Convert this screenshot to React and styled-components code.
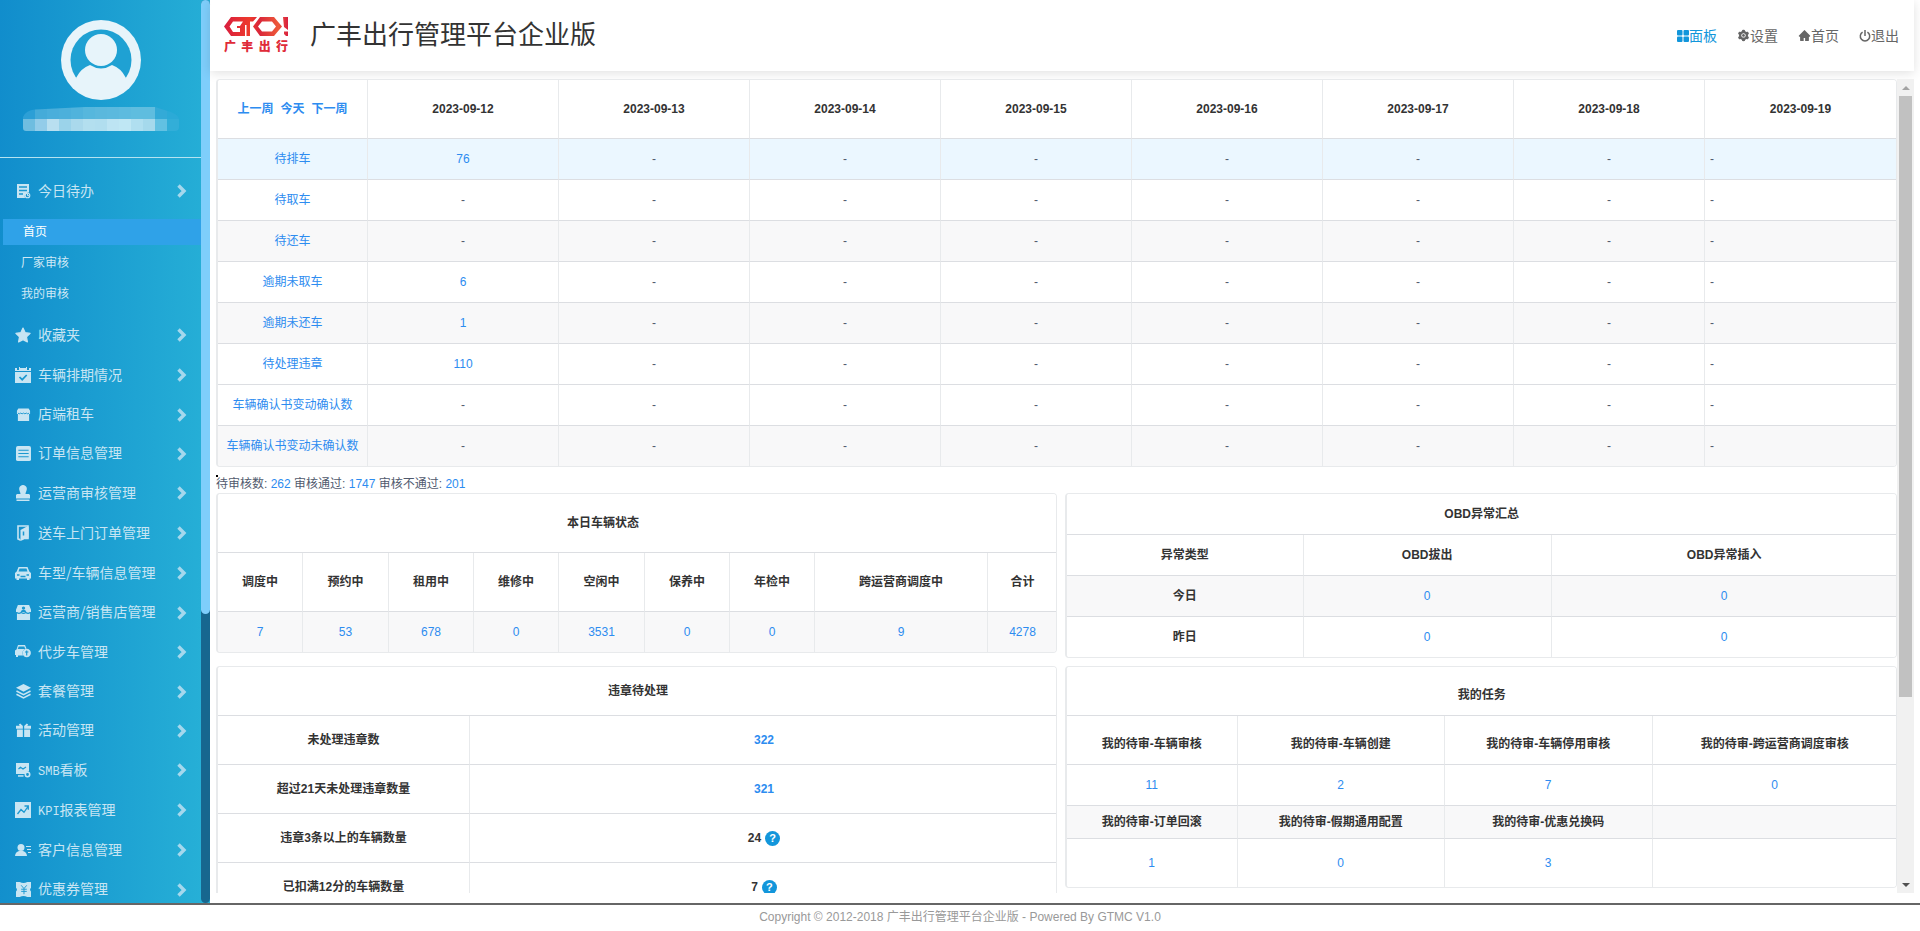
import React from 'react';
import styled, { createGlobalStyle } from 'styled-components';
import { AiFillHome, AiFillSetting } from 'react-icons/ai';

const colors = {
	link: '#2d8cf0',
	primary: '#1296db',
	text: '#515a6e',
	heading: '#333',
	border: '#e8eaec',
	rowLine: '#dcdee2',
	stripe: '#f8f8f9',
	active: '#ebf7ff',
	menuIcon: '#c8e5f3',
};

const days = [
	'2023-09-12',
	'2023-09-13',
	'2023-09-14',
	'2023-09-15',
	'2023-09-16',
	'2023-09-17',
	'2023-09-18',
	'2023-09-19',
];

const scheduleRows = [
	{ label: '待排车', count: 76, tone: 'active' },
	{ label: '待取车' },
	{ label: '待还车', tone: 'stripe' },
	{ label: '逾期未取车', count: 6 },
	{ label: '逾期未还车', count: 1, tone: 'stripe' },
	{ label: '待处理违章', count: 110 },
	{ label: '车辆确认书变动确认数' },
	{ label: '车辆确认书变动未确认数', tone: 'stripe' },
];

const vehicleStatus = [
	{ label: '调度中', value: 7, width: 85 },
	{ label: '预约中', value: 53, width: 86 },
	{ label: '租用中', value: 678, width: 85 },
	{ label: '维修中', value: 0, width: 85 },
	{ label: '空闲中', value: 3531, width: 86 },
	{ label: '保养中', value: 0, width: 85 },
	{ label: '年检中', value: 0, width: 85 },
	{ label: '跨运营商调度中', value: 9, width: 173 },
	{ label: '合计', value: 4278, width: 69 },
];

const violations = [
	{ label: '未处理违章数', value: 322, link: true },
	{ label: '超过21天未处理违章数量', value: 321, link: true },
	{ label: '违章3条以上的车辆数量', value: 24 },
	{ label: '已扣满12分的车辆数量', value: 7 },
];

const icons = {
	todo: (
		<>
			<path d="M2 1h12v8.500a4 4 0 0 0-4 5.500H2z" />
			<path d="M4 4h8M4 7.500h8M4 11h4" stroke="#1b98d0" strokeWidth="1.300" />
			<circle cx="12.500" cy="12.500" r="2.300" fill="none" stroke="currentColor" strokeWidth="1.100" />
			<path d="M12.500 11v1.700h1.500" fill="none" stroke="currentColor" />
		</>
	),
	star: (
		<path
			d="M8 1l2.200 4.700 4.900.700-3.600 3.500.9 5L8 12.600l-4.400 2.300.9-5L.9 6.400l4.900-.7z"
			stroke="currentColor"
			strokeWidth="1.200"
			strokeLinejoin="round"
		/>
	),
	calendar: (
		<>
			<path d="M0 1h2v2h2V0h1v1h6V0h1v3h2V1h2v3H0z" />
			<path d="M0 5h16v11H0z" />
			<path d="M4.500 10l2.700 2.700L11.700 8" fill="none" stroke="#1b98d0" strokeWidth="1.700" />
		</>
	),
	store: (
		<>
			<path d="M2.500 1.500h11L15 4v3.500h-1V15H2V7.500H1V4z" />
			<path d="M2 6.500q1.500 1.500 3 0 1.500 1.500 3 0 1.500 1.500 3 0 1.500 1.500 3 0" fill="none" stroke="#1b98d0" />
		</>
	),
	list: (
		<>
			<rect width="16" height="16" rx="2" />
			<path d="M2.500 4.500h11M2.500 8h11M2.500 11.500h11" stroke="#1b98d0" strokeWidth="1.200" />
		</>
	),
	stamp: (
		<>
			<path d="M8 0a3.700 3.700 0 0 1 3.700 4.700C11.400 6.500 10.500 7.500 10.500 9H14l1 1v3.500H1V10l1-1h3.500C5.500 7.500 4.600 6.500 4.300 4.700A3.700 3.700 0 0 1 8 0z" />
			<path d="M1.500 14.500h13V16h-13z" />
		</>
	),
	door: (
		<>
			<path d="M3 13V1h10v12.500h-3" fill="none" stroke="currentColor" strokeWidth="1.600" />
			<path d="M5.500 5L11 2h2.500v10.500L5.500 16z" />
			<path d="M2.200 12.500l3.300 1.500v2l-3.300-1.500z" />
			<path d="M8.500 6.500v4" stroke="#1b98d0" strokeWidth="1.500" />
		</>
	),
	car: (
		<>
			<path d="M3.500 2h9l1.800 4.500L16 8v5.500h-1.500V15H12v-1.500H4V15H1.500v-1.500H0V8l1.700-1.500z" />
			<path d="M4.500 3.500h7l1 3h-9z" fill="#1b98d0" />
			<path d="M2 10h2.500M11.500 10H14M5.500 11.500h5" stroke="#1b98d0" strokeWidth="1.300" />
		</>
	),
	dealer: (
		<>
			<path d="M2 0h12l2 5v2.500h-1V16H1V7.500H0V5z" />
			<circle cx="8" cy="3.300" r="1.800" fill="#1b98d0" />
			<path d="M5 7.500q.5-2.500 3-2.500t3 2.500" fill="#1b98d0" />
			<path d="M1 8q2 2 4.500 0 2.500 2 5 0Q13 10 15 8" fill="none" stroke="#1b98d0" strokeWidth="1.200" />
		</>
	),
	scooter: (
		<>
			<path d="M3 1h7l1.500 3.500A4.700 4.700 0 0 0 8 11.500H3V13H1v-2H0V6.500l1.500-1z" />
			<path d="M3.700 2.500h5.600l1 2.500H2.700z" fill="#1b98d0" />
			<circle cx="11.700" cy="9" r="4.200" />
			<path d="M11.700 6.500v5M10 8h3.400" stroke="#1b98d0" strokeWidth="1.200" />
		</>
	),
	layers: (
		<>
			<path d="M8 0l8 4-8 4.200L0 4z" />
			<path d="M.5 7.500L8 11.300l7.500-3.800M.5 11L8 14.900l7.500-3.900" fill="none" stroke="currentColor" strokeWidth="1.700" />
		</>
	),
	gift: (
		<>
			<path d="M0 3h4L3 1.500 4.500.500 7 3h2l2.500-2.500L13 1.500 12 3h4v3H8.700V3H7.300v3H0z" />
			<path d="M1 7h6.300v8H1zM8.700 7H15v8H8.700z" />
		</>
	),
	smb: (
		<>
			<path d="M1 1h13v8.500a4 4 0 0 0-4 2.500H1z" />
			<path d="M3.500 7l2-1.700 2.500 1.700L11 5" fill="none" stroke="#1b98d0" strokeWidth="1.200" />
			<circle cx="12.500" cy="12.500" r="2.200" fill="none" stroke="currentColor" strokeWidth="1.600" />
			<path d="M3 13.200h5.500v1.500H3z" />
		</>
	),
	chart: (
		<>
			<rect width="16" height="16" />
			<path d="M2.500 12L6 7.500l3 2.800L13 4.500M9.500 4h3.800v3.800" fill="none" stroke="#1b98d0" strokeWidth="1.300" />
		</>
	),
	customer: (
		<>
			<circle cx="6" cy="5.500" r="3.500" />
			<path d="M0 14q.3-4 4-5h4q3.700 1 4 5z" />
			<path d="M11 4.500h5M12 7.500h4M13 10.500h3" stroke="currentColor" strokeWidth="1.200" />
		</>
	),
	coupon: (
		<>
			<path d="M0 0h4q4 2 8 0h4v6q-2 2 0 4v6h-4q-4-2-8 0H0v-6q2-2 0-4z" />
			<path d="M5.500 3.500L8.500 7l3-3.500M8.500 7v6M5.500 7.700h6M5.500 10h6" fill="none" stroke="#1b98d0" />
		</>
	),
};

// icon size also sets the height of the row
const menu = [
	{ icon: 'star', label: '收藏夹', size: 16 },
	{ icon: 'calendar', label: '车辆排期情况', size: 16 },
	{ icon: 'store', label: '店端租车', size: 15 },
	{ icon: 'list', label: '订单信息管理', size: 15 },
	{ icon: 'stamp', label: '运营商审核管理', size: 16 },
	{ icon: 'door', label: '送车上门订单管理', size: 16 },
	{ icon: 'car', label: '车型/车辆信息管理', size: 16 },
	{ icon: 'dealer', label: '运营商/销售店管理', size: 15 },
	{ icon: 'scooter', label: '代步车管理', size: 16 },
	{ icon: 'layers', label: '套餐管理', size: 15 },
	{ icon: 'gift', label: '活动管理', size: 15 },
	{ icon: 'smb', prefix: 'SMB', label: '看板', size: 16 },
	{ icon: 'chart', prefix: 'KPI', label: '报表管理', size: 16 },
	{ icon: 'customer', label: '客户信息管理', size: 16 },
	{ icon: 'coupon', label: '优惠券管理', size: 15 },
];

const nameTiles = [
	['#2c9fd6', '#6fbde0'],
	['#45abd9', '#93cce9'],
	['#4aaedb', '#b9dff0'],
	['#4cb0db', '#9bd3ea'],
	['#50b3dc', '#aad9ec'],
	['#56b7dd', '#b3dfef'],
	['#5ab8dd', '#b1deef'],
	['#5bb9de', '#bde4f3'],
	['#5dbbdf', '#bfe7f4'],
	['#5fbddf', '#b0dff0'],
	['#5fbddf', '#a5d9ec'],
	['#33aad7', '#62c1e2'],
	['#2baad7', '#32aed8'],
];

function MenuItem({ icon, prefix, label, size }) {
	return (
		<MenuLink href="#">
			<IconSlot>
				<svg width={size} height={size} viewBox="0 0 16 16" fill="currentColor">
					{icons[icon]}
				</svg>
			</IconSlot>
			<MenuLabel>
				{prefix && <Latin>{prefix}</Latin>}
				{label}
			</MenuLabel>
			<svg width="10" height="14" viewBox="0 0 10 14" fill="none" stroke="#a5d8ed" strokeWidth="3.400">
				<path d="M1.500 1.500L7 7l-5.500 5.500" />
			</svg>
		</MenuLink>
	);
}

function Sidebar() {
	return (
		<SidebarWrap>
			<SidebarContent>
				<Profile>
					<svg width="80" height="80" viewBox="0 0 80 80">
						<circle cx="40" cy="40" r="40" fill="#e7f4fa" />
						<circle cx="40" cy="40" r="30.500" fill="#1fa1d3" />
						<path d="M15 58q5-10 14-13 11 7 22 0 9 3 14 13-6 17-25 17T15 58z" fill="#e7f4fa" />
						<circle cx="40" cy="30" r="16" fill="#e7f4fa" />
					</svg>
					<svg width="156" height="24" viewBox="0 0 156 24">
						<clipPath id="name">
							<path d="M0 10Q3 3 12 2.500L62 0h70l16 5q8 3 8 8v7q0 4-4 4H3q-3 0-3-3z" />
						</clipPath>
						<g clipPath="url(#name)" shapeRendering="crispEdges">
							{nameTiles.map(([top, bottom], i) => (
								<React.Fragment key={i}>
									<rect x={i * 12} width="12" height="12" fill={top} />
									<rect x={i * 12} y="12" width="12" height="12" fill={bottom} />
								</React.Fragment>
							))}
						</g>
					</svg>
				</Profile>
				<Menu>
					<MenuItem icon="todo" label="今日待办" size={16} />
					<SubMenu>
						<SubLink href="#" $active>
							首页
						</SubLink>
						<SubLink href="#">厂家审核</SubLink>
						<SubLink href="#">我的审核</SubLink>
					</SubMenu>
					{menu.map(item => (
						<MenuItem key={item.label} {...item} />
					))}
				</Menu>
			</SidebarContent>
			<SideTrack>
				<SideThumb />
			</SideTrack>
		</SidebarWrap>
	);
}

function Logo() {
	return (
		<LogoWrap>
			<svg width="64" height="19" viewBox="0 0 64 19">
				<defs>
					<linearGradient id="red" x1="0" x2="1" y1="0" y2="0">
						<stop offset="0" stopColor="#d81e3f" />
						<stop offset=".4" stopColor="#ee3a2c" />
						<stop offset=".55" stopColor="#d9263a" />
						<stop offset=".85" stopColor="#ee5a3a" />
						<stop offset="1" stopColor="#d81e3f" />
					</linearGradient>
				</defs>
				<g fill="url(#red)">
					<path
						fillRule="evenodd"
						d="M0 9.500L7 0h26l-4 4.500h-3V19h-3.500V8H21v11H7zM5.500 9.500L9 15h7v-4h-3V9h3l3-4.500H9zM36 0h14l8 9.500-8 9.500H36l-7-9.500zM38 4.500l-4 5 4 5h10l4-5-4-5zM59 0h5v13l-4-3zM60 14.500h4V19h-2l-2-2z"
					/>
				</g>
			</svg>
			<LogoText>
				<span>广</span>
				<span>丰</span>
				<span>出</span>
				<span>行</span>
			</LogoText>
		</LogoWrap>
	);
}

function Header() {
	return (
		<HeaderBar>
			<Logo />
			<Title>广丰出行管理平台企业版</Title>
			<Nav>
				<NavLink href="#" $active>
					<svg width="12" height="12" viewBox="0 0 12 12" fill="currentColor">
						<rect width="5.500" height="5.500" rx="1" />
						<rect x="6.500" width="5.500" height="5.500" rx="1" />
						<rect y="6.500" width="5.500" height="5.500" rx="1" />
						<rect x="6.500" y="6.500" width="5.500" height="5.500" rx="1" />
					</svg>
					面板
				</NavLink>
				<NavLink href="#">
					<AiFillSetting size={13} />
					设置
				</NavLink>
				<NavLink href="#">
					<AiFillHome size={13} />
					首页
				</NavLink>
				<NavLink href="#">
					<svg width="12" height="12" viewBox="0 0 12 12" fill="none" stroke="currentColor" strokeWidth="1.500">
						<path d="M3.600 2.200a4.700 4.700 0 1 0 4.800 0M6 0v6" />
					</svg>
					退出
				</NavLink>
			</Nav>
		</HeaderBar>
	);
}

function Schedule() {
	return (
		<Card>
			<Table>
				<colgroup>
					<Col $width={150} />
					{days.map(day => (
						<Col key={day} />
					))}
				</colgroup>
				<thead>
					<Row>
						<HeadCell $height={58}>
							<WeekLinks>
								<Link href="#">上一周</Link>
								<Link href="#">今天</Link>
								<Link href="#">下一周</Link>
							</WeekLinks>
						</HeadCell>
						{days.map(day => (
							<HeadCell key={day} $height={58}>
								{day}
							</HeadCell>
						))}
					</Row>
				</thead>
				<tbody>
					{scheduleRows.map(({ label, count, tone }) => (
						<Row key={label} $tone={tone}>
							<Cell>
								<Link href="#">{label}</Link>
							</Cell>
							{days.map((day, i) => (
								<Cell key={day} $left={i === days.length - 1}>
									{i === 0 && count ? <Link href="#">{count}</Link> : '-'}
								</Cell>
							))}
						</Row>
					))}
				</tbody>
			</Table>
		</Card>
	);
}

function VehicleStatus() {
	return (
		<Card>
			<Table>
				<colgroup>
					{vehicleStatus.map(({ label, width }) => (
						<Col key={label} $width={width} />
					))}
				</colgroup>
				<thead>
					<Row>
						<HeadCell colSpan={8} $height={58} $open>
							本日车辆状态
						</HeadCell>
						<HeadCell $height={58} />
					</Row>
					<Row>
						{vehicleStatus.map(({ label }) => (
							<HeadCell key={label} $height={58}>
								{label}
							</HeadCell>
						))}
					</Row>
				</thead>
				<tbody>
					<Row $tone="stripe">
						{vehicleStatus.map(({ label, value }) => (
							<Cell key={label}>
								<Link href="#">{value}</Link>
							</Cell>
						))}
					</Row>
				</tbody>
			</Table>
		</Card>
	);
}

function ObdSummary() {
	return (
		<Card>
			<Table>
				<colgroup>
					<Col $width={237} />
					<Col $width={248} />
					<Col $width={345} />
				</colgroup>
				<thead>
					<Row>
						<HeadCell colSpan={3}>OBD异常汇总</HeadCell>
					</Row>
					<Row>
						<HeadCell>异常类型</HeadCell>
						<HeadCell>OBD拔出</HeadCell>
						<HeadCell>OBD异常插入</HeadCell>
					</Row>
				</thead>
				<tbody>
					{['今日', '昨日'].map((label, i) => (
						<Row key={label} $tone={i === 0 ? 'stripe' : undefined}>
							<HeadCell>{label}</HeadCell>
							<Cell>
								<Link href="#">0</Link>
							</Cell>
							<Cell>
								<Link href="#">0</Link>
							</Cell>
						</Row>
					))}
				</tbody>
			</Table>
		</Card>
	);
}

function Violations() {
	return (
		<Card>
			<Table>
				<colgroup>
					<Col $width={252} />
					<Col $width={588} />
				</colgroup>
				<thead>
					<Row>
						<HeadCell colSpan={2} $height={48}>
							违章待处理
						</HeadCell>
					</Row>
				</thead>
				<tbody>
					{violations.map(({ label, value, link }) => (
						<Row key={label}>
							<HeadCell $height={48}>{label}</HeadCell>
							<HeadCell $height={48}>
								{link ? (
									<Link href="#">{value}</Link>
								) : (
									<Counter>
										{value}
										<HelpButton type="button">?</HelpButton>
									</Counter>
								)}
							</HeadCell>
						</Row>
					))}
				</tbody>
			</Table>
		</Card>
	);
}

function Tasks() {
	return (
		<Card>
			<Table>
				<colgroup>
					<Col $width={171} />
					<Col $width={207} />
					<Col $width={208} />
					<Col $width={244} />
				</colgroup>
				<thead>
					<Row>
						<HeadCell colSpan={4} $height={40} $top={8}>
							我的任务
						</HeadCell>
					</Row>
					<Row>
						{['我的待审-车辆审核', '我的待审-车辆创建', '我的待审-车辆停用审核', '我的待审-跨运营商调度审核'].map(label => (
							<HeadCell key={label} $height={40} $top={8}>
								{label}
							</HeadCell>
						))}
					</Row>
				</thead>
				<tbody>
					<Row>
						{[11, 2, 7, 0].map((value, i) => (
							<Cell key={i}>
								<Link href="#">{value}</Link>
							</Cell>
						))}
					</Row>
					<Row $tone="stripe">
						{['我的待审-订单回滚', '我的待审-假期通用配置', '我的待审-优惠兑换码', ''].map(label => (
							<HeadCell key={label} $height={32}>
								{label}
							</HeadCell>
						))}
					</Row>
					<Row>
						{[1, 0, 3].map((value, i) => (
							<Cell key={i} $height={48}>
								<Link href="#">{value}</Link>
							</Cell>
						))}
						<Cell />
					</Row>
				</tbody>
			</Table>
		</Card>
	);
}

export default function App() {
	return (
		<Page>
			<GlobalStyle />
			<Body>
				<Sidebar />
				<Main>
					<Header />
					<ContentRow>
						<Content>
							<Schedule />
							<AuditLine>
								待审核数: <Link href="#">262</Link> 审核通过: <Link href="#">1747</Link> 审核不通过:{' '}
								<Link href="#">201</Link>
							</AuditLine>
							<Cards>
								<VehicleStatus />
								<ObdSummary />
								<Violations />
								<Tasks />
							</Cards>
						</Content>
						<ScrollTrack>
							<ScrollArrow>
								<svg width="8" height="4" viewBox="0 0 8 4">
									<path d="M0 4l4-4 4 4z" fill="#a3a3a3" />
								</svg>
							</ScrollArrow>
							<ScrollMiddle>
								<ScrollThumb />
							</ScrollMiddle>
							<ScrollArrow>
								<svg width="8" height="4" viewBox="0 0 8 4">
									<path d="M0 0l4 4 4-4z" fill="#505050" />
								</svg>
							</ScrollArrow>
						</ScrollTrack>
					</ContentRow>
				</Main>
			</Body>
			<Footer>Copyright © 2012-2018 广丰出行管理平台企业版 - Powered By GTMC V1.0</Footer>
		</Page>
	);
}

const GlobalStyle = createGlobalStyle`
	body {
		margin: 0;
		font-family: "Liberation Sans", "Noto Sans CJK SC", sans-serif;
		font-size: 12px;
		color: ${colors.text};
		background: #fff;
	}

	svg {
		display: block;
		flex-shrink: 0;
	}
`;

const Page = styled.div`
	display: flex;
	flex-direction: column;
	height: 100vh;
	overflow: hidden;
`;

const Body = styled.div`
	display: flex;
	flex: 1;
	min-height: 0;
`;

const SidebarWrap = styled.aside`
	display: flex;
	width: 210px;
	flex-shrink: 0;
	background: linear-gradient(91deg, #118dcc, #27b1d7);
`;

const SidebarContent = styled.div`
	flex: 1;
	overflow: hidden;
`;

const Profile = styled.div`
	display: flex;
	flex-direction: column;
	align-items: center;
	gap: 7px;
	padding: 20px 0 26px;
	border-bottom: 1px solid #b5e3f1;
`;

const Menu = styled.nav`
	padding-top: 13px;
`;

const MenuLink = styled.a`
	display: flex;
	align-items: center;
	gap: 7px;
	padding: 12px 14px 12px 15px;
	font-family: 'Noto Sans CJK SC', sans-serif;
	font-size: 14px;
	line-height: 13px;
	text-decoration: none;
	color: ${colors.menuIcon};
`;

const IconSlot = styled.span`
	display: flex;
	justify-content: center;
	width: 16px;
`;

const MenuLabel = styled.span`
	flex: 1;
	height: 13px;
	padding-bottom: 2px;
	white-space: nowrap;
`;

const Latin = styled.span`
	font-family: 'Liberation Mono', monospace;
	font-size: 12px;
`;

const SubMenu = styled.div`
	display: flex;
	flex-direction: column;
	gap: 5px;
	padding: 8px 0 8px 3px;
`;

const SubLink = styled.a`
	padding-left: ${({ $active }) => ($active ? 20 : 18)}px;
	line-height: 26px;
	text-decoration: none;
	color: ${({ $active }) => ($active ? '#fff' : '#cfe8f5')};
	background: ${({ $active }) => ($active ? '#2fa2e8' : 'transparent')};
`;

const SideTrack = styled.div`
	width: 9px;
	border-radius: 5px;
	background: #17678f;
`;

const SideThumb = styled.div`
	height: 68%;
	border-radius: 5px;
	background: #7ecefb;
`;

const Main = styled.main`
	display: flex;
	flex: 1;
	flex-direction: column;
	min-width: 0;
	padding: 0 6px 10px 0;
`;

const HeaderBar = styled.header`
	display: flex;
	align-items: center;
	height: 71px;
	flex-shrink: 0;
	padding: 0 15px 0 14px;
	box-shadow: 0 2px 10px rgba(0, 0, 0, 0.12);
`;

const LogoWrap = styled.div`
	display: flex;
	flex-direction: column;
	gap: 5px;
	width: 64px;
`;

const LogoText = styled.div`
	display: flex;
	justify-content: space-between;
	font-weight: 900;
	line-height: 13px;
	color: #e02b38;
`;

const Title = styled.h1`
	flex: 1;
	margin: 0 0 2px 22px;
	font-size: 26px;
	font-weight: 400;
	line-height: 36px;
	color: ${colors.heading};
`;

const Nav = styled.nav`
	display: flex;
	gap: 20px;
`;

const NavLink = styled.a`
	display: flex;
	align-items: center;
	font-size: 14px;
	line-height: 20px;
	text-decoration: none;
	color: ${({ $active }) => ($active ? colors.primary : '#666')};
`;

const ContentRow = styled.div`
	display: flex;
	flex: 1;
	min-height: 0;
	margin: 8px 0 0 6px;
`;

const Content = styled.div`
	flex: 1;
	min-width: 0;
	overflow: hidden;
`;

const Card = styled.section`
	overflow: hidden;
	border: 1px solid ${colors.border};
	border-left-width: 2px;
	border-radius: 4px;
`;

const Table = styled.table`
	width: 100%;
	table-layout: fixed;
	border-collapse: separate;
	border-spacing: 0;
	font-size: 12px;
	line-height: 18px;
	color: ${colors.text};
`;

const Col = styled.col`
	width: ${({ $width }) => ($width ? `${$width}px` : 'auto')};
`;

const Cell = styled.td`
	height: ${({ $height = 40 }) => $height}px;
	padding: ${({ $top = 0 }) => $top}px 5px 0;
	border-right: ${({ $open }) => ($open ? 0 : 1)}px solid ${colors.border};
	border-bottom: 1px solid ${colors.rowLine};
	text-align: ${({ $left }) => ($left ? 'left' : 'center')};

	&:last-child {
		border-right: 0;
	}
`;

const HeadCell = styled(Cell).attrs({ as: 'th' })`
	font-weight: 700;
	color: ${colors.heading};
`;

const Row = styled.tr`
	background: ${({ $tone }) => colors[$tone] || '#fff'};

	tbody > &:last-child > * {
		border-bottom: 0;
	}
`;

const Link = styled.a`
	text-decoration: none;
	color: ${colors.link};
`;

const WeekLinks = styled.div`
	display: flex;
	justify-content: center;
	gap: 7px;
`;

const AuditLine = styled.div`
	padding: 8px 0 2px;
	line-height: 14px;

	&::before {
		content: '';
		display: block;
		width: 2px;
		height: 2px;
		background: #000;
	}
`;

const Cards = styled.div`
	display: grid;
	grid-template-columns: 101fr 100fr;
	gap: 8px;
	align-items: start;
`;

const Counter = styled.span`
	display: inline-flex;
	align-items: center;
	gap: 4px;
`;

const HelpButton = styled.button`
	width: 15px;
	height: 15px;
	padding: 0;
	border: 0;
	border-radius: 50%;
	font-family: inherit;
	font-size: 11px;
	font-weight: 700;
	line-height: 15px;
	color: #fff;
	background: ${colors.primary};
`;

const ScrollTrack = styled.div`
	display: flex;
	flex-direction: column;
	width: 17px;
	background: #f1f1f1;
`;

const ScrollArrow = styled.div`
	display: flex;
	align-items: center;
	justify-content: center;
	height: 17px;
`;

const ScrollMiddle = styled.div`
	flex: 1;
	padding: 0 2px;
`;

const ScrollThumb = styled.div`
	height: 77%;
	background: #c1c1c1;
`;

const Footer = styled.footer`
	padding-bottom: 2px;
	border-top: 2px solid #666;
	font-size: 12px;
	line-height: 24px;
	text-align: center;
	color: #999;
`;
